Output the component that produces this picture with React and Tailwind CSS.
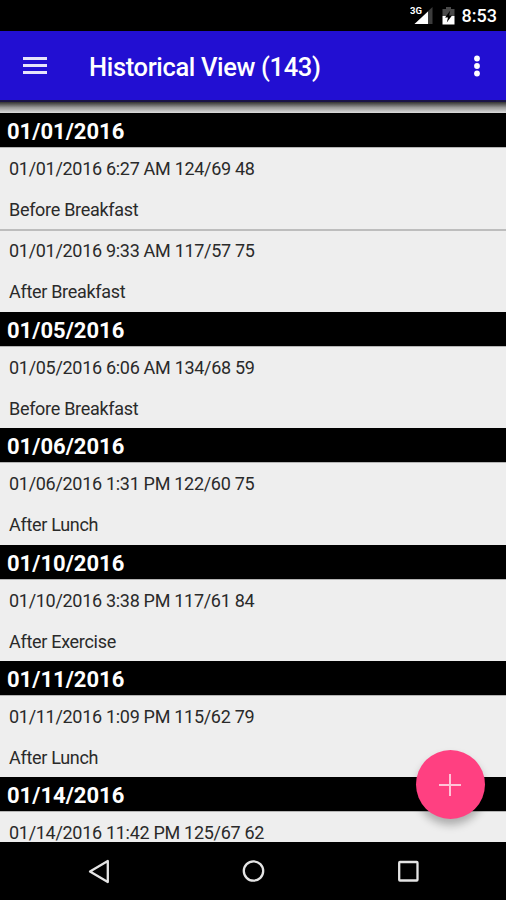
const sections = [
  {
    date: "01/01/2016",
    readings: [
      { value: "01/01/2016 6:27 AM 124/69 48", note: "Before Breakfast" },
      { value: "01/01/2016 9:33 AM 117/57 75", note: "After Breakfast" },
    ],
  },
  {
    date: "01/05/2016",
    readings: [{ value: "01/05/2016 6:06 AM 134/68 59", note: "Before Breakfast" }],
  },
  {
    date: "01/06/2016",
    readings: [{ value: "01/06/2016 1:31 PM 122/60 75", note: "After Lunch" }],
  },
  {
    date: "01/10/2016",
    readings: [{ value: "01/10/2016 3:38 PM 117/61 84", note: "After Exercise" }],
  },
  {
    date: "01/11/2016",
    readings: [{ value: "01/11/2016 1:09 PM 115/62 79", note: "After Lunch" }],
  },
  {
    date: "01/14/2016",
    readings: [{ value: "01/14/2016 11:42 PM 125/67 62" }],
  },
];

const StatusBar = () => (
  <div className="flex h-[31px] shrink-0 items-center justify-end bg-black pt-px pr-[9px] text-white">
    <svg width="24" height="20" viewBox="0 0 24 20" className="mr-[8px]">
      <path d="M22.500 1v17H4.500z" fill="#3c3c3c" />
      <path d="M18 5.500V18H4.500z" fill="#fff" />
      <text x="0" y="8" fontSize="9.500" fontWeight="700" fill="#fff" fontFamily="Roboto, sans-serif" textLength="12">
        3G
      </text>
    </svg>
    <svg width="13" height="18" viewBox="0 0 13 18" className="mr-[7px]">
      <path d="M4 0h5v2h3.500v7H.5V2H4z" fill="#4a4a4a" />
      <path d="M.5 9h12v8.500H.5z" fill="#fff" />
      <path d="M8.300 3.500L3 10.500h3L4.800 15.500l5.200-7H7z" fill="#000" />
    </svg>
    <span className="text-[18px] leading-none font-medium">8:53</span>
  </div>
);

const AppBar = () => (
  <header className="flex h-[71px] shrink-0 items-center border-b-2 border-[#1a1446] bg-[#220fd2] pt-[3px] text-white">
    <svg width="24" height="18" viewBox="0 0 24 18" className="ml-[23px] -mt-[2px]" fill="#e6e4fb">
      <path d="M0 0h24v3H0zM0 7h24v3H0zM0 14h24v3H0z" />
    </svg>
    <h1 className="ml-[42px] pt-[2px] text-[25.500px] leading-none font-medium tracking-[-0.350px]">
      Historical View (143)
    </h1>
    <svg width="6" height="22" viewBox="0 0 6 22" className="mr-[26px] ml-auto -mt-[2px]" fill="#fff">
      <circle cx="3" cy="3.500" r="2.900" />
      <circle cx="3" cy="11" r="2.900" />
      <circle cx="3" cy="18.500" r="2.900" />
    </svg>
  </header>
);

const Section = ({ date, readings }) => (
  <section>
    <h2 className="flex h-[34px] items-center bg-black pt-[3.950px] pl-[7px] text-[22px] leading-none font-bold text-white">
      {date}
    </h2>
    <ul className="border-t border-[#b4b4b4]">
      {readings.map((r, i) => (
        <li
          key={r.value}
          className={`pl-[9px] text-[18px] leading-[22px] tracking-[-0.300px] text-[#2a2a2a] ${
            i > 0 ? "h-[80.400px] pt-[9px]" : "pt-[10px]"
          } ${
            i < readings.length - 1 ? "h-[83.400px] border-b-2 border-[#bdbdbd]" : i === 0 ? "h-[81.400px]" : ""
          }`}
        >
          <p>{r.value}</p>
          {r.note && <p className="mt-[19px]">{r.note}</p>}
        </li>
      ))}
    </ul>
  </section>
);

const NavBar = () => (
  <nav className="flex h-[58px] shrink-0 items-center bg-black">
    <svg width="506" height="58" viewBox="0 0 506 58" fill="none" stroke="#e4e4e4" strokeWidth="2.300">
      <path d="M107.800 19v21L90 29.500z" strokeLinejoin="round" />
      <circle cx="253.500" cy="29" r="9.700" />
      <rect x="399.200" y="20" width="18.300" height="18.500" rx="0.800" />
    </svg>
  </nav>
);

const App = () => {
  return (
    <div className="relative flex h-[900px] w-[506px] flex-col overflow-hidden bg-[#eee] font-[Roboto,sans-serif]">
      <StatusBar />
      <AppBar />
      <main className="min-h-0 flex-1 overflow-hidden">
        <div className="h-[11px] bg-linear-to-b from-[#333] via-[#999] to-[#ddd]" />
        {sections.map((s) => (
          <Section key={s.date} {...s} />
        ))}
      </main>
      <NavBar />
      <button
        aria-label="Add reading"
        className="absolute right-[21.500px] bottom-[81px] flex size-[69px] items-center justify-center rounded-full bg-[#ff4081] shadow-[0_6px_8px_rgba(0,0,0,0.28)]"
      >
        <svg width="22" height="22" viewBox="0 0 22 22" stroke="#ffc3d7" strokeWidth="2">
          <path d="M0 11h22M11 0v22" />
        </svg>
      </button>
    </div>
  );
};

export default App;
